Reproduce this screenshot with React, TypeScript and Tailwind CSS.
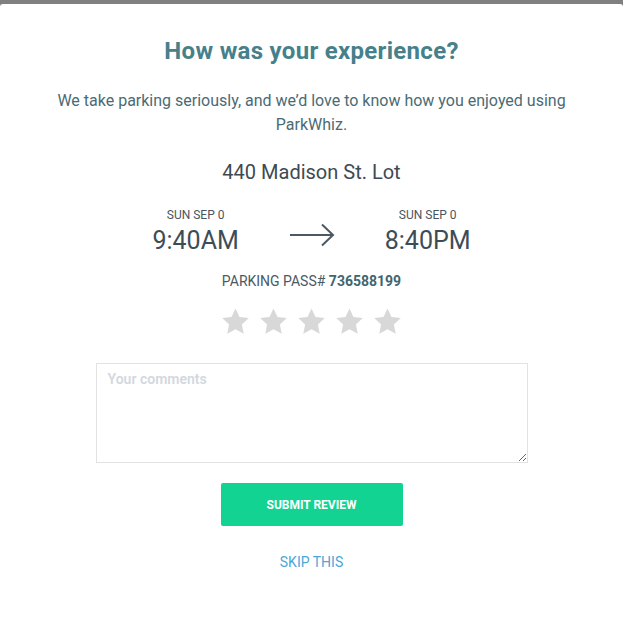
import { useState } from "react";

const Star = () => (
  <svg viewBox="0 0 24 24" className="w-[29px] h-[29px]" fill="#d8d8d8">
    <path d="M12 1.2l3.3 7.1 7.7.9-5.7 5.3 1.5 7.7L12 18.4l-6.8 3.8 1.5-7.7L1 9.2l7.7-.9z" />
  </svg>
);

const Arrow = () => (
  <svg viewBox="0 0 46 24" className="w-[46px] h-[24px]" fill="none" stroke="#4a5963" strokeWidth="2">
    <path d="M1 12h43M33 1.5L44 12 33 22.5" />
  </svg>
);

const TimeBlock = ({ date, time }: { date: string; time: string }) => (
  <div className="flex flex-col items-center">
    <span className="text-[12px] leading-[16px] text-[#4a5560]">{date}</span>
    <span className="mt-[3px] text-[25px] leading-[30px] text-[#3e4c56]">{time}</span>
  </div>
);

export default function App() {
  const [comment, setComment] = useState("");

  return (
    <div className="min-h-[620px] bg-[#808080] pt-1" style={{ fontFamily: "Roboto, 'Open Sans', sans-serif" }}>
      <div className="bg-white rounded-t-[3px] min-h-[616px] flex flex-col items-center pt-[33px]">
        <h1 className="text-[24px] leading-[28px] font-bold text-[#45808b] tracking-[0.3px]">
          How was your experience?
        </h1>
        <p className="mt-[24px] w-[540px] text-center text-[16px] leading-[24px] text-[#4b6b74]">
          We take parking seriously, and we’d love to know how you enjoyed using ParkWhiz.
        </p>
        <h2 className="mt-[23px] text-[20px] leading-[24px] text-[#3e4a52]">440 Madison St. Lot</h2>

        <div className="mt-[23px] flex items-center">
          <TimeBlock date="SUN SEP 0" time="9:40AM" />
          <div className="mx-[50px] pt-[6px]">
            <Arrow />
          </div>
          <TimeBlock date="SUN SEP 0" time="8:40PM" />
        </div>

        <div className="mt-[16px] text-[14px] leading-[18px] text-[#4a5a63]">
          PARKING PASS# <span className="font-bold text-[#3e6670]">736588199</span>
        </div>

        <div className="mt-[17px] flex gap-[9px]">
          <Star />
          <Star />
          <Star />
          <Star />
          <Star />
        </div>

        <textarea
          value={comment}
          onChange={(e) => setComment(e.target.value)}
          placeholder="Your comments"
          className="mt-[27px] w-[432px] h-[100px] border border-[#e2e2e2] px-[11px] py-[5px] text-[14px] font-semibold text-[#4a5a63] placeholder:text-[#d3d8de] outline-none"
        />

        <button className="mt-[20px] w-[182px] h-[43px] rounded-[2px] bg-[#13d392] text-white text-[12px] font-bold">
          SUBMIT REVIEW
        </button>

        <a href="#" className="mt-[27px] text-[14px] leading-[18px] text-[#4aa7d8]">
          SKIP THIS
        </a>
      </div>
    </div>
  );
}
